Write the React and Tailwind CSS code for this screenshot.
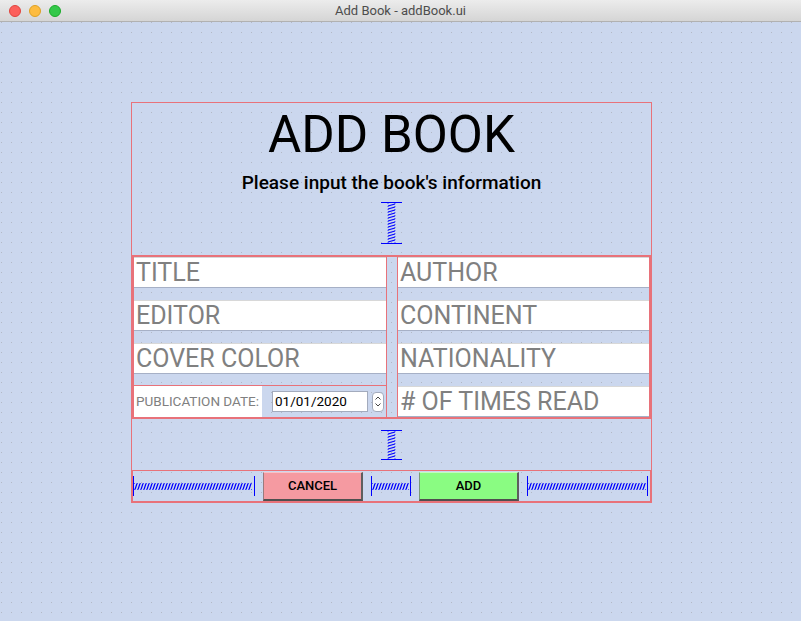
import React from 'react';

const RED = 'border-[#e8727a]';

// Qt Designer style spring, horizontal
function HSpring({ w }) {
  let coil = '';
  for (let x = 2; x < w - 3; x += 3) {
    coil += `M${x} 13.5 L${x + 2} 7.5 `;
  }
  return (
    <svg width={w} height="20" className="shrink-0 block">
      <line x1="0.5" y1="0" x2="0.5" y2="20" stroke="#0000ff" />
      <line x1={w - 0.5} y1="0" x2={w - 0.5} y2="20" stroke="#0000ff" />
      <path d={coil} stroke="#0000ff" strokeWidth="1.2" fill="none" />
      <line x1="1" y1="7.5" x2={w - 1} y2="7.5" stroke="#0000ff" strokeWidth="0.6" strokeDasharray="1 2" />
      <line x1="1" y1="13.5" x2={w - 1} y2="13.5" stroke="#0000ff" strokeWidth="0.6" strokeDasharray="1 2" />
    </svg>
  );
}

// vertical spring
function VSpring({ h }) {
  let coil = '';
  for (let y = 2; y < h - 3; y += 3) {
    coil += `M7 ${y + 2} L14 ${y} `;
  }
  return (
    <svg width="21" height={h} className="block">
      <line x1="0" y1="0.5" x2="21" y2="0.5" stroke="#0000ff" />
      <line x1="0" y1={h - 0.5} x2="21" y2={h - 0.5} stroke="#0000ff" />
      <path d={coil} stroke="#0000ff" strokeWidth="1.2" fill="none" />
      <line x1="7" y1="1" x2="7" y2={h - 1} stroke="#0000ff" strokeWidth="0.6" strokeDasharray="1 2" />
      <line x1="14" y1="1" x2="14" y2={h - 1} stroke="#0000ff" strokeWidth="0.6" strokeDasharray="1 2" />
    </svg>
  );
}

function Field({ label, first }) {
  return (
    <div
      className={`h-[31px] shrink-0 bg-white border-t border-[#d8d8d8] border-b border-b-[#a6b0c6] pl-[2px] pt-[1px] text-[25px] leading-[28px] text-[#808080] whitespace-nowrap overflow-hidden ${first ? '' : 'mt-[12px]'}`}
    >
      {label}
    </div>
  );
}

function TitleBar() {
  return (
    <div className="relative h-[22px] shrink-0 bg-gradient-to-b from-[#ececec] to-[#d5d5d5] border-b border-[#b1b1b1] flex items-center justify-center">
      <div className="absolute left-[9px] top-[5px] flex gap-[8px]">
        <div className="w-[12px] h-[12px] rounded-full bg-[#fc605c] border border-[#e0443e]" />
        <div className="w-[12px] h-[12px] rounded-full bg-[#fdbc40] border border-[#dea123]" />
        <div className="w-[12px] h-[12px] rounded-full bg-[#34c84a] border border-[#1aab29]" />
      </div>
      <span className="text-[13px] text-[#4d4d4d] leading-none">Add Book - addBook.ui</span>
    </div>
  );
}

function DateRow() {
  return (
    <div className={`h-[32px] mt-[11px] border-t ${RED} flex items-center`}>
      <div className="w-[128px] h-full bg-white flex items-center pl-[2px] text-[13.5px] text-[#808080] whitespace-nowrap">
        PUBLICATION DATE:
      </div>
      <div className="ml-[10px] w-[96px] h-[21px] bg-white border border-[#a3abbd] flex items-center pl-[2px] text-[13.5px] text-black">
        01/01/2020
      </div>
      <div className="ml-[4px] w-[12px] h-[20px] bg-white border border-[#a3abbd] rounded-[4px] flex flex-col items-center justify-center gap-[3px]">
        <svg width="6" height="4" className="block">
          <path d="M0.5 3.5 L3 1 L5.5 3.5" stroke="#444" fill="none" />
        </svg>
        <svg width="6" height="4" className="block">
          <path d="M0.5 0.5 L3 3 L5.5 0.5" stroke="#444" fill="none" />
        </svg>
      </div>
    </div>
  );
}

export default function App() {
  return (
    <div className="w-[801px] h-[621px] flex flex-col overflow-hidden font-['Roboto','Liberation_Sans',sans-serif]">
      <TitleBar />
      <div className="relative flex-1 bg-[#cbd7ee]">
        {/* designer dot grid */}
        <svg className="absolute inset-0 w-full h-full" aria-hidden="true">
          <defs>
            <pattern id="dots" width="10" height="10" x="1" y="0" patternUnits="userSpaceOnUse">
              <rect width="1" height="1" fill="#b2b8c4" />
            </pattern>
          </defs>
          <rect width="100%" height="100%" fill="url(#dots)" />
        </svg>

        <div className={`relative ml-[131px] mt-[80px] w-[521px] h-[401px] border ${RED} flex flex-col items-center`}>
          <h1 className="mt-[7px] h-[50px] text-[51px] leading-[50px] text-black">ADD BOOK</h1>
          <p className="mt-[12px] h-[22px] text-[19px] leading-[22px] font-medium text-black">
            Please input the book's information
          </p>
          <div className="mt-[8px]">
            <VSpring h={42} />
          </div>

          {/* form grid */}
          <div className={`mt-[11px] self-stretch h-[164px] border-2 ${RED} flex`}>
            <div className="w-[252px] flex flex-col">
              <Field label="TITLE" first />
              <Field label="EDITOR" />
              <Field label="COVER COLOR" />
              <DateRow />
            </div>
            <div className={`w-[12px] border-x ${RED}`} />
            <div className="flex-1 flex flex-col">
              <Field label="AUTHOR" first />
              <Field label="CONTINENT" />
              <Field label="NATIONALITY" />
              <Field label="# OF TIMES READ" />
            </div>
          </div>

          <div className="mt-[11px]">
            <VSpring h={30} />
          </div>

          {/* buttons */}
          <div className={`mt-[10px] self-stretch h-[32px] border ${RED} flex items-center gap-[8px]`}>
            <HSpring w={122} />
            <button className="w-[100px] h-[29px] shrink-0 bg-[#f59aa1] border-t border-l border-t-[#f7c3c7] border-l-[#9a7b7e] border-r-2 border-b-2 border-r-[#5e5e5e] border-b-[#4f4f4f] text-[13px] font-medium text-black">
              CANCEL
            </button>
            <HSpring w={40} />
            <button className="w-[100px] h-[29px] shrink-0 bg-[#8afc82] border-t border-l border-t-[#c2fdbd] border-l-[#7a9a77] border-r-2 border-b-2 border-r-[#5e5e5e] border-b-[#4f4f4f] text-[13px] font-medium text-black">
              ADD
            </button>
            <HSpring w={121} />
          </div>
        </div>
      </div>
    </div>
  );
}
